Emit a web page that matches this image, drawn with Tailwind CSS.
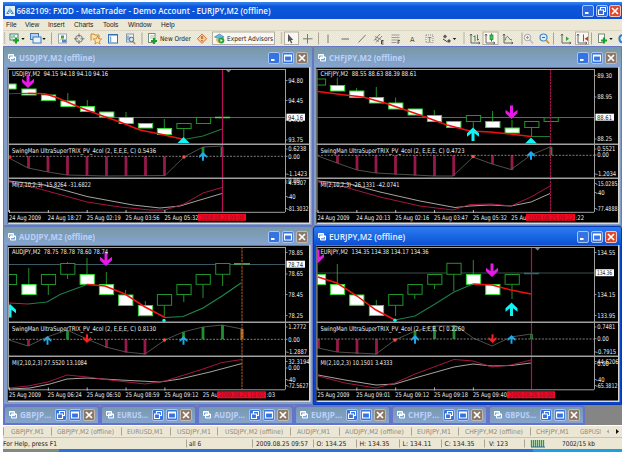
<!DOCTYPE html>
<html lang="en">
<head>
<meta charset="utf-8">
<title>MetaTrader</title>
<script src="https://cdn.jsdelivr.net/npm/@tailwindcss/browser@4"></script>
</head>
<body class="bg-white overflow-hidden">
<div class="w-[625px] h-[452px] pl-[3px] pr-[3px] pt-[2px] flex flex-col overflow-hidden font-['Liberation_Sans',sans-serif] text-[6.7px] text-[#222] whitespace-nowrap">
  <header class="h-[17px] shrink-0 flex items-center bg-linear-to-b from-[#3a86f0] via-[#0b57dc] via-25% to-[#0a50d4] pl-[2px] pr-[1px]">
    <svg class="w-[10px] h-[10px] mr-[1px]" viewBox="0 0 10 10"><rect width="10" height="10" fill="#e4f0fa"/><path d="M1 8L5 1.500L9 8Z" fill="#3f8fc0"/><path d="M5 2V8M3 6L5 8L7 6" stroke="#fff" fill="none" stroke-width=".8"/></svg>
    <svg class="h-[16px] w-[258px] overflow-visible" viewBox="0 0 258 16"><text x="0.500" y="11" textLength="254" lengthAdjust="spacingAndGlyphs" font-family="Open Sans, sans-serif" font-size="8.500" font-weight="600" fill="#eef4ff">6682109: FXDD - MetaTrader - Demo Account - EURJPY,M2 (offline)</text></svg>
    <div class="ml-auto flex gap-[1.500px]" id="main-buttons"></div>
  </header>
  <nav class="h-[12px] shrink-0 flex items-center bg-[#ede8d6] border-b border-[#dcd7c2] pl-[3px] text-[6.6px]">
    <span class="w-[19px]">File</span><span class="w-[23px]">View</span><span class="w-[26px]">Insert</span><span class="w-[29px]">Charts</span><span class="w-[25px]">Tools</span><span class="w-[33px]">Window</span><span>Help</span>
  </nav>
  <div id="tool-strip" class="h-[15px] shrink-0 flex bg-[repeating-conic-gradient(#e9e3cd_0_25%,#f2eede_0_50%)] bg-[length:2px_2px]"></div>
  <main class="h-[379px] shrink-0 bg-[#858585] flex flex-col">
    <div id="chart-windows" class="grid grid-cols-[310px_309px] grid-rows-[180px_179px]"></div>
    <div id="minimized-windows" class="flex h-[20px]"></div>
  </main>
  <div id="tab-strip" class="h-[12px] shrink-0 flex items-center bg-[#ece7d4] border-t border-white"></div>
  <footer id="status-bar" class="h-[12px] shrink-0 flex items-center bg-[#ece7d4] border-t border-[#c9c4b0]"></footer>
  <div class="h-[3px] shrink-0 flex"><div class="w-[56px] bg-[#7f8b80]"></div><div class="w-[474px] bg-[#2b73dc]"></div><div class="grow bg-[#19a0e8]"></div></div>
</div>
<script>
const fill = (id, html) => { document.getElementById(id).innerHTML = html; };
const UI = 'font-family="DejaVu Sans Condensed, DejaVu Sans, sans-serif"';
const label = (x, y, w, s, color = '#ececec', size = 6.5) =>
  `<text x="${x}" y="${y}" textLength="${w}" lengthAdjust="spacingAndGlyphs" font-size="${size}" fill="${color}" ${UI}>${s}</text>`;

// Caption buttons
const glyph = {
  min: '<path d="M3 8H6.500" stroke="#fff" stroke-width="2"/>',
  max: '<path d="M2.500 3H9.500V9H2.500ZM2.500 4H9.500" stroke="#fff" fill="none" stroke-width="1.200"/>',
  restore: '<path d="M4.500 4.500V2.500H9.500V6.500H8M2.500 5H7.500V9.500H2.500Z" stroke="#fff" fill="none" stroke-width="1.100"/>',
  close: '<path d="M3 3L9 9M9 3L3 9" stroke="#fff" stroke-width="1.700"/>'
};
function button(kind, color, edge) {
  return `<svg class="w-[12px] h-[12px]" viewBox="0 0 12 12"><rect x=".5" y=".5" width="11" height="11" rx="1.500" fill="${color}" stroke="${edge}"/>${glyph[kind]}</svg>`;
}
fill('main-buttons', button('min', '#2b68e0', '#a8c8ff') + button('restore', '#2b68e0', '#a8c8ff') + button('close', '#e0482c', '#f6c4b8'));

// Toolbar: each cell is [left, right, drawing], drawn on one shared coordinate plane
const sep = x => `<path d="M${x} 33V45" stroke="#aaa591"/>`;
const grip = x => `<path d="M${x} 33V45" stroke="#a49f8c" stroke-width="1.500" stroke-dasharray="1 1"/>`;
const caret = x => `<path d="M${x - 1.7} 38.500h3.400l-1.700 2z" fill="#111"/>`;
const pressed = (x, w) => `<rect x="${x + .5}" y="32.500" width="${w}" height="12.500" fill="#f8f7f1" stroke="#b5b09c"/>`;
const axes = x => `<path d="M${x - 4} 34.500V43.500H${x + 5}M${x - 5} 36l1-1.500l1 1.500M${x + 3.5} 42.500l1.500 1l-1.500 1" stroke="#555" fill="none" stroke-width=".9"/>`;
const plus = (x, y) => `<path d="M${x - 3} ${y}h6M${x} ${y - 3}v6" stroke="#18a028" stroke-width="2.200"/>`;
const cells = [
  [3, 26, `${grip(4.5)}<rect x="10" y="34.500" width="8" height="6" fill="#f4faf4" stroke="#467c78"/><path d="M12 36v3M14 35.500v3" stroke="#2a5" />${plus(16, 41)}${caret(23)}`],
  [26, 54, `<rect x="30.500" y="34" width="8" height="6" fill="#b5d4f4" stroke="#3c78bc"/><rect x="33" y="37.500" width="8" height="6" fill="#e7f2fc" stroke="#3c78bc"/>${caret(44)}${sep(51.5)}`],
  [54, 71, `<rect x="58.500" y="34.500" width="8" height="9" fill="#fcfcfa" stroke="#98a8b0"/><path d="M61 36h3v3h-3z" fill="#42a25c"/><path d="M62 40h4v3h-4z" fill="#4a86c8"/><path d="M60 41l2-2l1.500 2" stroke="#d89030" fill="none"/>`],
  [71, 88, `<circle cx="79" cy="39.300" r="3.500" fill="none" stroke="#777"/><path d="M79 34v4M79 40.500v4M74 39.300h4M80.500 39.300h4" stroke="#777"/>`],
  [88, 105, `<path d="M91 41V34.500h3l1 1h4v4" fill="#f7e2a2" stroke="#c58a39"/><path d="M97.500 36.500l1.200 2.800l3 .2l-2.300 2l.7 3l-2.600-1.600l-2.600 1.600l.7-3l-2.300-2l3-.2z" fill="#fce9b2" stroke="#d17a31" stroke-width=".8"/>`],
  [105, 122, `<rect x="108.500" y="35" width="9" height="8.500" fill="#f8fbff" stroke="#3972ae"/><path d="M109 35.500h8.500" stroke="#3972ae"/><path d="M110.500 37v6" stroke="#7ba7d4" stroke-width="1.500"/>`],
  [122, 145, `<rect x="126.500" y="34.500" width="7" height="8" fill="#eef4f6" stroke="#7e9aac"/><path d="M128 36v5M130 37v4" stroke="#579"/><circle cx="131.500" cy="40" r="2.200" fill="#d6e8f4" stroke="#668"/><path d="M133 42l2.200 2.500" stroke="#b8842b" stroke-width="1.200"/>${sep(142)}`],
  [145, 194, `<rect x="148.500" y="34" width="6.500" height="9" fill="#fcfcfa" stroke="#7c8c7c"/><path d="M150 36.500h4M150 38.500h4" stroke="#8aa08a" stroke-width=".7"/>${plus(154, 41.5)}${label(160, 41.6, 31, 'New Order', '#222', 6.7)}`],
  [194, 211, `<path d="M202 34.500l4.700 4.700l-4.700 4.700l-4.700-4.700z" fill="#f6c99a" stroke="#cf7b36"/><path d="M202 36.500v3M202 40.500v1.200" stroke="#9a4a18" stroke-width="1.200"/>`],
  [211, 277, `${pressed(212, 62)}<path d="M214.500 37.500l5-3l4.500 3l-4.500 2z" fill="#68b8e0" stroke="#2e7898" stroke-width=".6"/><path d="M216 39c0 3.500 1.500 4.500 4 4.500v-4z" fill="#efb85a"/><circle cx="221.300" cy="41" r="3" fill="#28a343"/><path d="M220.500 39.500v3l2.200-1.500z" fill="#fff"/>${label(227, 41.6, 46, 'Expert Advisors', '#222', 6.7)}`],
  [277, 301, `${grip(281.5)}${pressed(284, 14)}<path d="M288 34.500v8l1.800-1.600l1.300 3l1.200-.6l-1.300-2.800h2.300z" fill="#555"/>`],
  [301, 320, `<path d="M307.500 34.500v9.500M303 39.300h9.500" stroke="#777"/>${sep(318.5)}`],
  [320, 337, '<path d="M328 35v8.500" stroke="#777"/>'],
  [337, 354, '<path d="M341.500 39.500h7.500" stroke="#666"/>'],
  [354, 371, '<path d="M358.500 43l7-7.500" stroke="#777"/>'],
  [371, 388, '<path d="M374 41l6-6.500M376 43l6-6.500M375 37l6 3M375 39.500l4 2.500" stroke="#777" stroke-width=".9"/><path d="M383.500 41h-2v3.500h2M381.500 42.500h2" stroke="#333" fill="none" stroke-width=".9"/>'],
  [388, 405, '<path d="M391.500 35.500h8M391.500 38h8M391.500 40.500h8M391.500 43h5" stroke="#888" stroke-width=".8"/><path d="M400 41h-2v3.500M398 42.700h1.500" stroke="#444" fill="none" stroke-width=".8"/>'],
  [405, 421, label(410, 42.200, 4.500, 'A', '#444', 7)],
  [421, 437, `<rect x="426" y="35.500" width="7" height="7.500" fill="none" stroke="#888" stroke-dasharray="1 1"/>${label(427.5, 42, 4, 'T', '#555', 6.5)}`],
  [437, 468, `<path d="M445 35l2 2l-2 2l-2-2zM449 39.500l2 2l-2 2l-2-2z" fill="#555"/><path d="M443 39.500l4.500 3" stroke="#444"/>${caret(454.5)}${grip(464)}`],
  [468, 482, `${axes(475)}<path d="M475 36v6M477.500 35v6M475 37h-1.500M477.500 40h1.500" stroke="#2a7c3a" stroke-width=".9"/>`],
  [482, 499, `${pressed(482.5, 15)}${axes(490)}<path d="M491.500 34v8" stroke="#188028"/><rect x="490" y="35.500" width="3" height="4.500" fill="#42c44e" stroke="#188028" stroke-width=".7"/>`],
  [499, 524, `${axes(508)}<path d="M505 41c1-4 2.500-5 3.500-3s2 2 3.500 2.500" stroke="#398449" fill="none"/>${sep(522)}`],
  [524, 537, '<circle cx="527.500" cy="38" r="3.300" fill="#eee" stroke="#aaa"/><path d="M526 38h3M527.500 36.500v3" stroke="#999"/><path d="M530 40.500l3 3.500" stroke="#bbb" stroke-width="1.500"/>'],
  [537, 556, `<circle cx="543.500" cy="38" r="3.500" fill="#dceefc" stroke="#3f86cc" stroke-width="1.200"/><path d="M542 38h3" stroke="#2b6cb4"/><path d="M546 40.500l3 3.500" stroke="#c99730" stroke-width="1.800"/>${sep(553.5)}`],
  [556, 574, `${axes(566)}<path d="M566 37v4.500l3-2.200z" fill="#2ba03c"/>`],
  [574, 593, `${pressed(575, 13)}${axes(582)}<path d="M583.500 35v7" stroke="#3c62b0"/><path d="M588 37v4.500l-3.500-2.200z" fill="#d4372a"/>${sep(591.5)}`],
  [593, 622, `<rect x="598.500" y="34.500" width="6" height="8.500" fill="#fbfbf8" stroke="#7c8c7c"/>${plus(604, 41)}${caret(611)}<path d="M622 35.500a4 4 0 0 0 0 7.500" stroke="#2c7cd4" stroke-width="2" fill="none"/>`]
];
fill('tool-strip', cells.map(([a, b, d]) => `<svg class="h-[15px] shrink-0" width="${b - a}" viewBox="${a} 31.500 ${b - a} 15">${d}</svg>`).join(''));

// Chart windows. Candle: [left, top, bottom, type, wickTop, wickBottom]
const W = 1, H = 0;
const charts = [
  { x: 7, top: 69, left: 9, right: 285, end: 309, name: 'USDJPY,M2', info: 'USDJPY,M2&#160; 94.15 94.18 94.10 94.16', infoW: 96,
    trix: '0.5436', mi: 'MI(2,10,2,3) -15.8264 -31.6822', miW: 79, sep: [144, 178, 212],
    candles: [[1.5,84,89,W],[21.5,89,95,W],[41,95,100.5,W],[60.5,101,106.5,W,93],[80,106.5,111.5,W,100],[99.3,112,117,W],[118.7,117.5,123.5,W,112],[138,123.5,128,W],[157,128.5,134.5,W,119],[176.5,123.5,128.5,H,123,138],[196,117.5,123.5,H]],
    dash: [215, 230, 117.5, '#3ee63e'], price: 117.5, priceText: '94.16', vx: 222.5, vc: '#b41058', hc: '#4f6670',
    ma: [['#18506c','9,93.700 28,93.300'],['#f01010','28,93.300 45,93.700 58,98 80,107.500 100,115 120,122 140,130 160,134 184,139.500'],['#1d7c34','184,139.500 203,136 222,129']],
    zero: 156.3, bars: [[28.5,168],[48,172],[67.5,175],[87,175.5],[106.5,176],[126,176],[145.5,176],[164.5,175.5],[203,147,'#209030'],[222,147,'#209030']],
    curve: '9,158 28,168 48,172 67,175 106,176 165,175.500 184,157 203,147 222,146',
    w: '9,181 45,185 60,189 87,196.500 133,205 160,208 180,206 200,200 222,193.500', r: '9,182 40,189 87,202 120,207 150,210 165,210 184,204 203,193 222,187.500',
    marks: [['d',28,74,'#e818e8',1],['t',183.5,137],['u',203,152,'#20a8e8',.65],['dot',184,157,'#ff5038'],['dot',10,157,'#f22']],
    ys: [[80.5,'94.80'],[100.5,'94.45'],[120,'94.10'],[140,'93.75'],[149,'0.6238'],[156.3,'0.00'],[174,'-1.1423'],[183,'4.9307'],[181,'0.00'],[196.5,'-40'],[208.5,'-81.3032']],
    xs: ['24 Aug 2009','24 Aug 18:27','25 Aug 02:19','25 Aug 03:56','25 Aug 05:32'], tag: [198,48,'2009.08.25 09:08'], marker: 228.5 },
  { x: 316, top: 69, left: 317.5, right: 594, end: 618, name: 'CHFJPY,M2', info: 'CHFJPY,M2&#160; 88.55 88.63 88.39 88.61', infoW: 96,
    trix: '0.4723', mi: 'MI(2,10,2,3) -26.1331 -42.0741', miW: 79, sep: [144, 178, 212],
    candles: [[311,79,85,H],[330,85.5,91,W,77.5],[349.3,91,97.5,W,88],[369,97.5,103,W,87],[388.3,103,109,W,97.5],[407.7,109,115,W],[427,115.5,121.5,W,110],[446.3,121.5,127.5,W],[466,115.5,121.5,H,115,128],[485.3,121.5,127.5,W,111],[504.7,128,133,W,120],[524.3,121.5,127.5,H,121,137],[543.7,117.7,121.5,H]],
    price: 117.5, priceText: '88.61', vx: 550.5, vc: '#a81050', vd: 1, hc: '#5b6666',
    ma: [['#f01010','318,91.500 345,95 363,97 385,103 420,115 447,125 470,131 490,132 510,134 531,136.500'],['#1d7c34','531,136.500 550,136.500']],
    zero: 155.3, bars: [[337.5,163],[357,170],[376,173],[395.5,174.5],[415,175.5],[434.5,176],[453.7,176],[492.5,164],[512,170],[551,147,'#209030']],
    curve: '318,156 337,163 357,170 376,173 434,176 453,176 473,157 492,164 511,169.500 531,155 550,147',
    w: '318,181 350,184 380,192 420,201 455,207.500 470,206 490,205 511,206 531,202 550,193.500', r: '318,182 345,187 380,197 420,206 453,210 470,204.500 492,204 511,206 531,197 550,186',
    marks: [['u',473,127.5,'#10f4f4',1],['d',511.5,105,'#e818e8',1],['t',531,137.5],['u',531,151,'#20a8e8',.65],['dot',473,156.5,'#ff5038']],
    ys: [[75.5,'89.30'],[97,'88.95'],[139,'88.25'],[149,'0.5521'],[155,'0.00'],[174,'-1.2034'],[183.5,'-15.0285'],[192.5,'-40'],[208.5,'-77.4888']],
    xs: ['24 Aug 2009','24 Aug 20:13','25 Aug 02:16','25 Aug 03:47','25 Aug 05:32'], cut: '25 Au', tail: ':22', tag: [526,49,'2009.08.25 09:22'] },
  { x: 7, top: 247, left: 9, right: 285, end: 309, name: 'AUDJPY,M2', info: 'AUDJPY,M2&#160; 78.75 78.78 78.60 78.74', infoW: 96,
    trix: '0.8130', mi: 'MI(2,10,2,3) 27.5520 13.1084', miW: 75, sep: [322, 356, 389.5],
    candles: [[2,274.5,284.5,H],[21.5,284.5,294.5,W,268],[41,274.5,284.5,H,274,295],[60.3,263.5,274.3,H,262,279],[79.7,274.5,284.3,W,258],[99,284.5,294.5,W,272],[118.3,295,305.5,W,290],[138,305.5,315.7,W,301],[157,294.5,305.3,H,294,316],[176.5,284.5,294.5,H,284,302],[195.7,274.5,284.3,H,274,298],[215.3,263.5,274.3,H,263,286]],
    dash: [234, 250, 263.8, '#50d850'], price: 264.5, priceText: '78.74', vx: 242, vc: '#9a4820', vd: 1, hc: '#3c5a66',
    ma: [['#e01030','9,303 28,304'],['#1d7c4c','28,304 47,302 60,294.500 87,284.500'],['#f01010','87,284.500 105,286 125,294 145,307 165,317.500'],['#1d8c4c','165,317.500 183,316.500 203,308 222,296 241,283']],
    zero: 339.3, bars: [[28.5,346],[67.5,330,'#209030'],[106.5,348],[126,352.5],[145,354.5],[183.5,332,'#209030'],[203,327,'#209030'],[222.5,325,'#209030'],[242,329,'#e09030']],
    curve: '9,340 28,346 47,337 67,330 87,339 106,347 126,352 145,354 165,340 183,332 203,327 222,325 242,329',
    w: '9,389 30,388 50,384 67,379 87,378 120,380 160,382 180,379 210,372 242,363.500', r: '9,388 28,386 48,382 67,375 87,377 110,380 145,384 165,381 203,369 222,362.500 242,359.500',
    marks: [['u',10,304,'#10f4f4',1],['d',106,252,'#e818e8',1],['u',47.5,336,'#20a8e8',.65],['d',87,334,'#f82020',.65],['u',183.5,336,'#20a8e8',.65],['dot',164,320.5,'#10f4f4'],['dot',164.500,340,'#ff5038']],
    ys: [[252.5,'78.85'],[274,'78.65'],[294.5,'78.45'],[315.5,'78.25'],[327,'1.2772'],[339.3,'0.00'],[352,'-1.2887'],[361.5,'32.3194'],[368,'0.00'],[379.5,'-40'],[385.5,'-72.5627']],
    xs: ['25 Aug 2009','25 Aug 06:24','25 Aug 06:50','25 Aug 08:59','25 Aug 09:12'], cut: '25 Au', tail: ':03', tag: [217,49,'2009.08.25 10:02'] },
  { x: 316, top: 247, left: 317.5, right: 594, end: 618, name: 'EURJPY,M2', info: 'EURJPY,M2&#160; 134.35 134.38 134.17 134.36', infoW: 108, active: true,
    trix: '0.2260', mi: 'MI(2,10,2,3) 10.1501 3.4333', miW: 72, sep: [322, 356, 389.5],
    candles: [[311,274.5,284.5,W],[330,284.5,294.5,W,264],[349.3,295,305.3,W],[369,305.5,315.5,W,300],[388.3,294.5,305.3,H,294,316],[407.5,284.5,294.3,H,284,299],[427.3,274.5,284.3,H,274,289],[446.5,263.3,274.3,H,263,291],[466,274.5,284.3,W,260],[485.3,284.5,294.5,W],[504.7,274.5,284.3,H,274,299]],
    dash: [524, 539, 273.5, '#287078'], price: 273, priceText: '134.36', vx: 531.5, vc: '#b41058', hc: '#3a5048',
    ma: [['#f01010','318,277 337,283 357,296 376,310 395,320'],['#1d7c4c','395,320 415,316 435,304 454,292 473,284'],['#f01010','473,284 492,285 511,290 531,294']],
    zero: 339, bars: [[318.5,348],[337.5,352],[357,354],[376.5,354.5],[415,331,'#209030'],[434.5,326,'#209030'],[454,325,'#209030'],[531.5,334,'#209030']],
    curve: '318,348 337,352 376,354 395,340 415,331 434,326 457,326 473,338 492,346 511,337 531,334',
    w: '318,375 345,380 376,385 395,384 415,378 454,367 473,364 492,366 511,365.500 531,363', r: '318,376 345,383 376,388 395,383 415,374 454,359.500 473,361 492,367 511,365 531,360',
    marks: [['d',318,249,'#e818e8',1],['d',492,263,'#e818e8',1],['u',511.5,302.5,'#10f4f4',1],['u',415,335,'#20a8e8',.65],['d',492.5,334,'#f82020',.65],['u',511.5,335,'#20a8e8',.65],['dot',395,340,'#ff5038'],['dot',395,320.3,'#10f4f4']],
    ys: [[252.5,'134.55'],[294.5,'134.15'],[315.5,'133.95'],[327,'0.7481'],[338.7,'0.00'],[352,'-0.7915'],[361.5,'44.6206'],[363.5,'0.00'],[379.5,'-40'],[385.5,'-65.3812']],
    xs: ['25 Aug 2009','25 Aug 09:01','25 Aug 09:12','25 Aug 09:18','25 Aug 09:40'], tag: [507,48,'2009.08.25 10:00'], marker: 537.5 }
];
const charW = s => [...s].reduce((n, c) => n + ('.,'.includes(c) ? 1.7 : c === '-' ? 2 : c === ' ' ? 1.8 : 3.3), 0);

function mark([k, x, y, c, s = 1]) {
  if (k === 'dot') return `<circle cx="${x}" cy="${y}" r="1.700" fill="${c}"/>`;
  if (k === 't') return `<path d="M${x} ${y}L${x + 6} ${y + 6}H${x - 6}Z" fill="#10f4f4"/>`;
  const body = 'M-1.500 13.500V5.800L-6 9.300V5.800L0 0L6 5.800V9.300L1.500 5.800V13.500Z';
  return `<path transform="translate(${x} ${k === 'u' ? y : y + 14 * s}) scale(${s} ${k === 'u' ? s : -s})" d="${body}" fill="${c}"/>`;
}
function draw(c, i) {
  const [s1, s2, s3] = c.sep, id = 'plot' + i, T = c.top;
  let g = '';
  g += `<path d="M${c.left} ${c.price}H${c.right}" stroke="${c.hc}"/>`;
  for (const [l, t, b, type, wt, wb] of c.candles) {
    const m = l + 7.3;
    if (wt) g += `<path d="M${m} ${wt}V${type ? t : wb}" stroke="#28a028" stroke-width=".9"/>`;
    g += `<rect x="${l + .4}" y="${t}" width="14.200" height="${b - t}" fill="${type ? '#fff' : '#000'}" stroke="${type ? '#38dc38' : '#209428'}"/>`;
  }
  if (c.dash) g += `<path d="M${c.dash[0]} ${c.dash[2]}H${c.dash[1]}" stroke="${c.dash[3]}" stroke-width="1.300"/>`;
  for (const [col, p] of c.ma) g += `<polyline points="${p}" fill="none" stroke="${col}" stroke-width="${col === '#f01010' ? 1.500 : 1.100}"/>`;
  for (const [x, y, col = '#98184c'] of c.bars) g += `<rect x="${x - 1.4}" y="${Math.min(y, c.zero)}" width="2.800" height="${Math.abs(y - c.zero)}" fill="${col}"/>`;
  g += `<polyline points="${c.curve}" fill="none" stroke="#585850" stroke-width=".9"/>`;
  g += `<path d="M${c.left} ${c.zero}H${c.right}" stroke="#8c8c8c" stroke-width=".9" stroke-dasharray="2 1.400"/>`;
  g += `<polyline points="${c.w}" fill="none" stroke="#b8b8b0" stroke-width=".9"/><polyline points="${c.r}" fill="none" stroke="#b81848" stroke-width=".9"/>`;
  g += c.marks.map(mark).join('');
  if (c.marker) g += `<path d="M${c.marker - 3} ${T + .5}h6l-3 3z" fill="#78838c"/>`;
  g += `<path d="M${c.vx} ${T}V${s3}" stroke="${c.vc}" stroke-width="1.200" ${c.vd ? 'stroke-dasharray="2.500 .7"' : ''}/>`;
  const tx = c.left + 3;
  let o = label(tx, T + 7.2, c.infoW, c.info) + label(tx, s1 + 9, 144, 'SwingMan UltraSuperTRIX_PV_4col (2, E,E,E, C) ' + c.trix) + label(tx, s2 + 8.7, c.miW, c.mi);
  // Pane borders and vertical scale
  o += `<path d="M${c.left} ${T + .5}H${c.right}M${c.left - .5} ${T}V${s3}M${c.right + .5} ${T}V${s3}M${c.left} ${s3 + .3}H${c.right}" stroke="#a0a0a0" fill="none"/>`;
  o += `<path d="M${c.left - 1} ${s1 + .2}H${c.end}M${c.left - 1} ${s2 + .2}H${c.end}" stroke="#a0a0a0" stroke-width="1.600"/>`;
  for (const [y, s] of c.ys)
    o += `<path d="M${c.right} ${y}h2.500" stroke="#aaa" stroke-width=".8"/>` + label(c.right + (s[0] === '-' ? 2 : 3.2), y + 2.4, Math.min(charW(s), c.end - c.right - 2.5), s);
  o += `<rect x="${c.right + 1.5}" y="${c.price - 3.8}" width="18.500" height="7" fill="#fff"/>` + label(c.right + 3, c.price + 2.1, 15, c.priceText, '#222');
  c.xs.forEach((s, n) => {
    const x = c.left + n * 38.85;
    o += `<path d="M${x + .5} ${s3 - 2}v3" stroke="#ccc" stroke-width=".9"/>` + label(x, s3 + 7.8, n ? 34 : 32, s);
  });
  const [rx, rw, rs] = c.tag;
  if (c.cut) o += label(c.left + 5 * 38.85 - .5, s3 + 7.8, 15, c.cut);
  if (c.tail) o += label(rx + rw + .5, s3 + 7.8, 8.5, c.tail);
  o += `<rect x="${rx}" y="${s3 + 1.8}" width="${rw}" height="7" fill="#f4081c"/>` + label(rx + 2, s3 + 7.8, rw - 4, rs, '#8a1038');
  const w = c.end - c.x + 1.5, h = 157;
  return `<svg class="block" width="${w}" height="${h}" viewBox="${c.x} ${T - 2} ${w} ${h}">
    <defs><clipPath id="${id}"><rect x="${c.left}" y="${T}" width="${c.right - c.left}" height="${s3 - T}"/></clipPath></defs>
    <rect x="${c.x}" y="${T - 2}" width="${w}" height="${h}" fill="#d8d8d0"/><path d="M${c.x} ${T + 155}V${T - 2}H${c.end}" stroke="#787868" stroke-width="2.500" fill="none"/>
    <rect x="${c.left - 1}" y="${T - 1}" width="${c.end - c.left + 1}" height="154.500" fill="#000"/>
    <g clip-path="url(#${id})">${g}</g>${o}</svg>`;
}
const docIcon = '<svg class="w-[8px] h-[8px] shrink-0" viewBox="0 0 8 8"><path d="M.5 .5h5v4h-5zM2.500 3h5v4h-5z" fill="#7ea8da" stroke="#fff"/><path d="M.5 1h5M2.500 3.300h5" stroke="#fff"/></svg>';
const caption = (s, w, active) => `<svg class="h-[13px] overflow-visible" width="${w + 4}" viewBox="0 0 ${w + 4} 13"><text x="2" y="9.400" textLength="${w}" lengthAdjust="spacingAndGlyphs" font-family="Open Sans, sans-serif" font-size="8" font-weight="${active ? 600 : 700}" fill="${active ? '#e8f0ff' : '#bcd0fa'}">${s}</text></svg>`;
fill('chart-windows', charts.map((c, i) => {
  const a = c.active;
  const frame = a ? 'bg-[#0a46cc] border-[#0838b0]' : 'bg-[#829ec8] border-[#6678c4]';
  const bar = a ? 'bg-linear-to-b from-[#2c7cf0] to-[#0c50d4]' : 'bg-linear-to-b from-[#7898a6] to-[#84a4d0]';
  const title = i < 2 ? 'h-[20px]' : 'h-[18px]';
  return `<section class="flex flex-col border rounded-t-[3px] overflow-hidden ${frame}">
    <div class="${title} shrink-0 flex items-center pl-[4px] pr-[4px] pt-[2px] ${bar}">${docIcon}<span class="w-[1px]"></span>${caption(c.name + ' (offline)', 76, a)}
    <span class="ml-auto flex gap-[2px]">${button('min', '#3574e0', '#a8c4f4')}${button('max', '#3574e0', '#a8c4f4')}${button('close', a ? '#e0482c' : '#8c7868', a ? '#f6c4b8' : '#c4b8b0')}</span></div>
    <div class="${i % 2 ? 'pl-[2px]' : 'pl-[3px]'}">${draw(c, i)}</div></section>`;
}).join(''));
fill('minimized-windows', ['GBPJP...', 'EURUS...', 'AUDJP...', 'EURJP...', 'CHFJP...', 'GBPUS...'].map(s =>
  `<div class="w-[97px] h-[20px] flex items-center pl-[4px] pr-[3px] border-2 border-[#6474cc] rounded-t-[4px] bg-linear-to-b from-[#7898ae] to-[#86a4cc]">${docIcon}<span class="w-[1px]"></span>${caption(s, 31)}<span class="ml-auto flex gap-[2px]">${button('restore', '#3574e0', '#a8c4f4')}${button('max', '#3574e0', '#a8c4f4')}${button('close', '#8c7868', '#c4b8b0')}</span></div>`).join(''));

// Bottom strips: [cell width, text offset, text width, text]
const cell = ([w, o, tw, s], h, color, line) => `<svg class="shrink-0" width="${w}" height="${h}" viewBox="0 0 ${w} ${h}">${line ? `<path d="M.5 1.500V${h - 1.5}" stroke="#aaa593"/>` : ''}${s ? label(o, 8, tw, s, color, 6.7) : ''}</svg>`;
fill('tab-strip', [[48,8,33,'GBPJPY,M1'],[70,6,57,'GBPJPY,M2 (offline)'],[49,6,36,'EURUSD,M1'],[47,7,34,'USDJPY,M1'],[73,8,58,'USDJPY,M2 (offline)'],[49,7,33,'AUDJPY,M1'],[72,6,59,'AUDJPY,M2 (offline)'],[47,6,34,'EURJPY,M1'],[72,7,58,'CHFJPY,M2 (offline)'],[46,6,33,'CHFJPY,M1']]
  .map(t => cell(t, 11, '#8d897c', true)).join('') +
  `<svg width="46" height="11" viewBox="0 0 46 11">${label(4, 8, 21, 'GBPUSI', '#8d897c', 6.7)}<path d="M33 3.500v4l-2.500-2z" fill="#aaa"/><path d="M40 3v5l3-2.500z" fill="#111"/></svg>`);
fill('status-bar', cell([183,0,54,'For Help, press F1'], 11, '#222', false) + [[66,3,12,'all 6'],[61,4,52,'2009.08.25 09:57'],[43,3.5,30,'O: 134.25'],[43,3.5,30,'H: 134.35'],[42,3.5,29,'L: 134.11'],[43,3.5,30,'C: 134.35'],[40,5,19,'V: 123']]
  .map(t => cell(t, 11, '#222', true)).join('') +
  '<svg width="22" height="11" viewBox="0 0 22 11"><path d="M.5 1.500v8" stroke="#aaa593"/><path d="M7.500 2v7M9.500 2v7M11.500 2v7M13.500 2v7M15.500 2v7M17.500 2v7M19.500 2v7" stroke="#2f9c3c" stroke-width="1.300"/><path d="M7 9h14" stroke="#246cb0"/></svg>' + cell([60,16,33,'7002/15 kb'], 11, '#222', false));
</script>
</body>
</html>
